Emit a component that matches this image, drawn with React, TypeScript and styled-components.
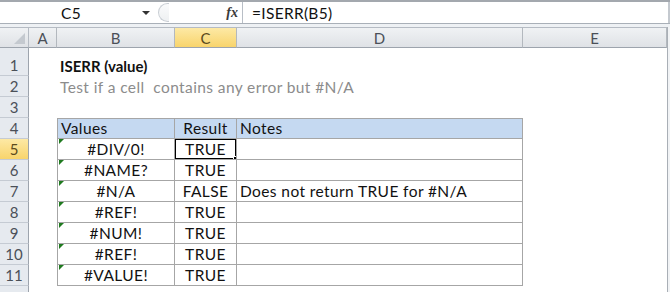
import React from "react";
import styled, { createGlobalStyle, css } from "styled-components";

const Global = createGlobalStyle`
  html, body { margin: 0; padding: 0; background: #ffffff; }
  body { width: 670px; height: 292px; overflow: hidden; font-family: Lato, "Liberation Sans", sans-serif; }
`;

const Frame = styled.div`
  width: 670px;
  height: 292px;
  overflow: hidden;
  display: flex;
  flex-direction: column;
  background: #fff;
  position: relative;
  & > * { flex-shrink: 0; }
`;

const FormulaBar = styled.div`
  height: 21px;
  display: flex;
  align-items: stretch;
  border-top: 2px solid #a3a8ae;
  border-bottom: 1px solid #a9b0b8;
  background: #fff;
`;

const NameBox = styled.div`
  width: 158px;
  display: flex;
  align-items: center;
  font-size: 15.5px;
  letter-spacing: 0.3px;
  color: #111;
`;

const NameText = styled.span`
  width: 142px;
  text-align: center;
`;

const DropArrow = styled.span`
  width: 0;
  height: 0;
  border-left: 4px solid transparent;
  border-right: 4px solid transparent;
  border-top: 4px solid #333;
  margin-top: 1px;
`;

const Splitter = styled.div`
  width: 14px;
  display: flex;
  align-items: center;
  justify-content: flex-start;
`;

const SplitterCap = styled.span`
  width: 10px;
  height: 17px;
  border: 1px solid #c9ced4;
  border-right: none;
  border-radius: 10px 0 0 10px;
  background: linear-gradient(#fafbfc, #eef0f2);
`;

const FxArea = styled.div`
  width: 71px;
  display: flex;
  align-items: center;
  justify-content: flex-end;
  padding-right: 4px;
  box-sizing: border-box;
  border-right: 1px solid #b8bec6;
  font-family: "Liberation Serif", serif;
  font-style: italic;
  font-weight: bold;
  font-size: 14px;
  color: #3a3a3a;
`;

const FormulaText = styled.div`
  flex: 1;
  display: flex;
  align-items: center;
  padding-left: 9px;
  font-size: 15.5px;
  letter-spacing: 0.3px;
  color: #111;
  border-right: 2px solid #c4c9cf;
`;

const Gap = styled.div`
  height: 3px;
  background: #eef1f4;
`;

const Sheet = styled.div`
  display: grid;
  grid-template-columns: 29px 28px 118px 62px 286px 144px 3px;
  grid-template-rows: 21px 28px repeat(11, 21px);
  font-size: 15.5px;
  letter-spacing: 0.4px;
  color: #111;
`;

const headerBg = css`
  background: linear-gradient(#f0f2f4, #dfe2e6);
`;
const activeBg = css`
  background: linear-gradient(#fde9a5, #f8d46c);
`;

const Corner = styled.div`
  ${headerBg};
  border-top: 1px solid #b5bbc3;
  border-right: 1px solid #b5bbc3;
  border-bottom: 1px solid #9da4ad;
  box-sizing: border-box;
  position: relative;
  &::after {
    content: "";
    position: absolute;
    right: 3px;
    bottom: 3px;
    width: 0;
    height: 0;
    border-left: 11px solid transparent;
    border-bottom: 11px solid #c4c9cf;
  }
`;

const ColHeader = styled.div<{ $active?: boolean }>`
  ${(p) => (p.$active ? activeBg : headerBg)};
  box-sizing: border-box;
  border-top: 1px solid #b5bbc3;
  border-right: 1px solid #b3b8be;
  border-bottom: 1px solid #9da4ad;
  display: flex;
  align-items: center;
  justify-content: center;
  color: ${(p) => (p.$active ? "#5b4a1c" : "#4b5058")};
  font-size: 15px;
  letter-spacing: 0;
`;

const ScrollEdge = styled.div<{ $span: number }>`
  grid-row: 1 / span ${(p) => p.$span};
  grid-column: 7;
  border-left: 1px solid #a9afb6;
  background: #f1f3f5;
`;

const RowHeader = styled.div<{ $active?: boolean }>`
  ${(p) => (p.$active ? activeBg : css`background: #e6eaef;`)};
  box-sizing: border-box;
  border-right: 1px solid #9da4ad;
  border-bottom: 1px solid #c5cbd3;
  display: flex;
  align-items: flex-end;
  justify-content: center;
  padding-bottom: 1px;
  color: ${(p) => (p.$active ? "#5b4a1c" : "#4b5058")};
  font-size: 15px;
  letter-spacing: 0;
`;

type Align = "left" | "center";

const Cell = styled.div<{
  $align?: Align;
  $bold?: boolean;
  $muted?: boolean;
  $table?: boolean;
  $head?: boolean;
  $first?: boolean;
  $top?: boolean;
  $err?: boolean;
  $selected?: boolean;
  $overflow?: boolean;
}>`
  box-sizing: border-box;
  position: relative;
  display: flex;
  align-items: flex-end;
  justify-content: ${(p) => (p.$align === "center" ? "center" : "flex-start")};
  padding: 0 3px 1px 3px;
  white-space: nowrap;
  overflow: ${(p) => (p.$overflow ? "visible" : "hidden")};
  z-index: ${(p) => (p.$overflow ? 1 : "auto")};
  font-weight: ${(p) => (p.$bold ? 700 : 400)};
  ${(p) => p.$bold && css`font-size: 15px; letter-spacing: 0;`}
  color: ${(p) => (p.$muted ? "#8c8c8c" : "#111")};
  background: ${(p) => (p.$head ? "#c5d9f1" : "transparent")};
  ${(p) =>
    p.$table &&
    css`
      border-right: 1px solid #a6a6a6;
      border-bottom: 1px solid #a6a6a6;
    `}
  ${(p) => p.$table && p.$first && css`border-left: 1px solid #a6a6a6;`}
  ${(p) => p.$table && p.$top && css`border-top: 1px solid #a6a6a6;`}
  ${(p) =>
    p.$err &&
    css`
      &::before {
        content: "";
        position: absolute;
        left: 1px;
        top: 0;
        width: 0;
        height: 0;
        border-top: 5px solid #1f7a1f;
        border-right: 5px solid transparent;
      }
    `}
  ${(p) =>
    p.$selected &&
    css`
      &::after {
        content: "";
        position: absolute;
        left: -1px;
        top: -1px;
        right: -1px;
        bottom: -1px;
        border: 2px solid #000;
        pointer-events: none;
      }
    `}
`;

const Handle = styled.span`
  position: absolute;
  right: -4px;
  bottom: -4px;
  width: 5px;
  height: 5px;
  background: #000;
  border: 1px solid #fff;
  z-index: 2;
`;

const rows = [
  { v: "#DIV/0!", r: "TRUE", n: "" },
  { v: "#NAME?", r: "TRUE", n: "" },
  { v: "#N/A", r: "FALSE", n: "Does not return TRUE for #N/A" },
  { v: "#REF!", r: "TRUE", n: "" },
  { v: "#NUM!", r: "TRUE", n: "" },
  { v: "#REF!", r: "TRUE", n: "" },
  { v: "#VALUE!", r: "TRUE", n: "" },
];

export default function App() {
  return (
    <Frame>
      <Global />
      <FormulaBar>
        <NameBox>
          <NameText>C5</NameText>
          <DropArrow />
        </NameBox>
        <Splitter>
          <SplitterCap />
        </Splitter>
        <FxArea>fx</FxArea>
        <FormulaText>=ISERR(B5)</FormulaText>
      </FormulaBar>
      <Gap />
      <Sheet>
        <Corner />
        {["A", "B", "C", "D", "E"].map((c) => (
          <ColHeader key={c} $active={c === "C"}>
            {c}
          </ColHeader>
        ))}
        <ScrollEdge $span={13} />

        <RowHeader>1</RowHeader>
        <Cell />
        <Cell $bold $overflow>ISERR (value)</Cell>
        <Cell />
        <Cell />
        <Cell />

        <RowHeader>2</RowHeader>
        <Cell />
        <Cell $muted $overflow>Test if a cell&nbsp; contains any error but #N/A</Cell>
        <Cell />
        <Cell />
        <Cell />

        <RowHeader>3</RowHeader>
        <Cell />
        <Cell />
        <Cell />
        <Cell />
        <Cell />

        <RowHeader>4</RowHeader>
        <Cell />
        <Cell $table $head $first $top>Values</Cell>
        <Cell $table $head $top $align="center">Result</Cell>
        <Cell $table $head $top>Notes</Cell>
        <Cell />

        {rows.map((row, i) => (
          <React.Fragment key={i}>
            <RowHeader $active={i === 0}>{i + 5}</RowHeader>
            <Cell />
            <Cell $table $first $err $align="center">{row.v}</Cell>
            <Cell $table $align="center" $selected={i === 0}>
              {row.r}
              {i === 0 && <Handle />}
            </Cell>
            <Cell $table>{row.n}</Cell>
            <Cell />
          </React.Fragment>
        ))}

        <RowHeader />
        <Cell />
        <Cell />
        <Cell />
        <Cell />
        <Cell />
      </Sheet>
    </Frame>
  );
}
